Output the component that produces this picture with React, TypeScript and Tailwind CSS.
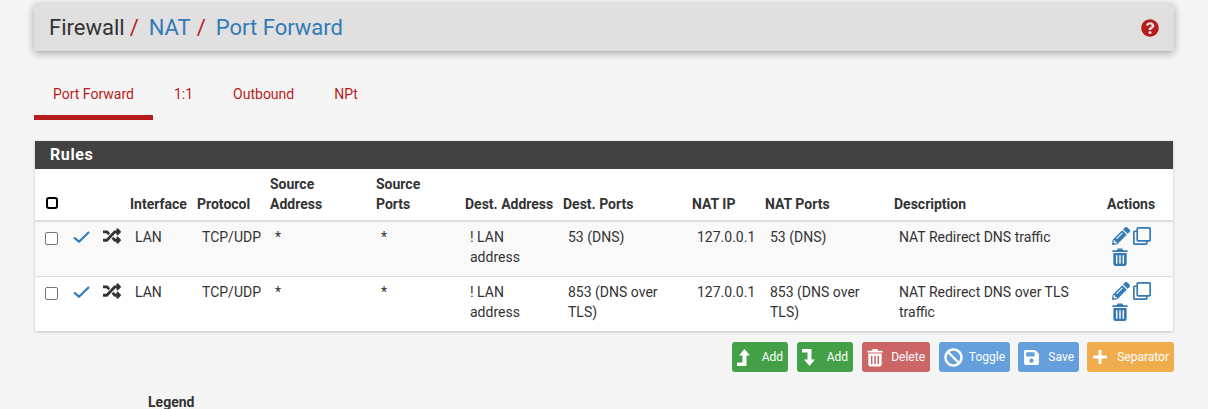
import React from "react";
import { FaBan, FaPencilAlt, FaPlus, FaQuestionCircle, FaRandom, FaRegClone, FaSave } from "react-icons/fa";

const TrashIcon = ({ className }: { className?: string }) => (
  <svg viewBox="0 0 18 20" className={className} fill="currentColor">
    <path d="M6.5 0.5h5l1 2h5v2h-17v-2h5z" />
    <path fillRule="evenodd" d="M1.5 5.5h15v12.5a2 2 0 0 1-2 2h-11a2 2 0 0 1-2-2zM4.5 8v9.5h1.6V8zM8.2 8v9.5h1.6V8zM11.9 8v9.5h1.6V8z" />
  </svg>
);

const CheckIcon = () => (
  <svg viewBox="0 0 17 12" className="h-3 w-[17px] text-[#337ab7]" fill="none" stroke="currentColor" strokeWidth="2.2">
    <path d="M1 6.5l5 4.2L16 1" />
  </svg>
);

const ArrowUpIcon = () => (
  <svg viewBox="0 0 13 17" className="h-[17px] w-[13px]" fill="currentColor">
    <path d="M7.5 0L13 6.5H9.5V17H0V13.5H5.5V6.5H2z" />
  </svg>
);

const ArrowDownIcon = () => (
  <svg viewBox="0 0 13 17" className="h-[17px] w-[13px]" fill="currentColor">
    <path d="M0 0H9.5V10.5H13L7.5 17L2 10.5H5.5V3.5H0z" />
  </svg>
);

const rules = [
  { dports: "53 (DNS)", natPorts: "53 (DNS)", description: "NAT Redirect DNS traffic" },
  { dports: "853 (DNS over TLS)", natPorts: "853 (DNS over TLS)", description: "NAT Redirect DNS over TLS traffic" },
];

const tabs = ["Port Forward", "1:1", "Outbound", "NPt"];

function Th({ children }: { children?: React.ReactNode }) {
  return (
    <th className="border-b-[2px] border-[#dddddd] px-[5px] pb-[6px] pt-[5px] text-left align-bottom font-bold leading-[20px]">
      {children}
    </th>
  );
}

function Td({ children, line }: { children?: React.ReactNode; line: boolean }) {
  return (
    <td className={`py-[5px] pl-[10px] pr-[5px] align-top leading-[20px] ${line ? "border-b border-[#dddddd]" : ""}`}>
      {children}
    </td>
  );
}

function Btn({ icon, label, color, width }: { icon: React.ReactNode; label: string; color: string; width: string }) {
  return (
    <button className={`flex h-[30px] items-center justify-between rounded-[3px] pl-[5px] pr-[5px] text-[12px] font-normal text-white ${color} ${width}`}>
      {icon}
      <span>{label}</span>
    </button>
  );
}

export default function App() {
  return (
    <div className="h-[409px] overflow-hidden bg-[#f5f5f5] px-[34px] pt-[4px] font-['Roboto',sans-serif] text-[#333333]">
      <div className="flex h-[47px] items-center justify-between rounded-[3px] bg-[#e0e0e0] pl-[15px] pr-[15px] text-[22px] shadow-[0_2px_8px_rgba(0,0,0,0.35)]">
        <h1 className="flex items-center">
          <span>Firewall</span>
          <span className="ml-[5px] mr-[10px] text-[#b71c1c]">/</span>
          <span className="text-[#337ab7]">NAT</span>
          <span className="ml-[6px] mr-[10px] text-[#b71c1c]">/</span>
          <span className="text-[#337ab7]">Port Forward</span>
        </h1>
        <FaQuestionCircle className="h-[18px] w-[18px] text-[#b71c1c]" />
      </div>

      <ul className="mt-[19px] flex h-[50px] text-[14px] text-[#b71c1c]">
        {tabs.map((tab, i) => (
          <li
            key={tab}
            className={`flex items-start pt-[14px] ${i === 0 ? "mr-px border-b-[5px] border-[#b71c1c] pl-[19px] pr-[19px]" : "px-[20px]"}`}
          >
            {tab}
          </li>
        ))}
      </ul>

      <div className="mx-px mt-[21px] bg-white shadow-[0_1px_3px_rgba(0,0,0,0.2)]">
        <h2 className="flex h-[28px] items-center bg-[#424242] pl-[15px] text-[16px] font-bold tracking-[0.6px] text-white">Rules</h2>
        <table className="w-full table-fixed border-separate border-spacing-0 text-[14px]">
          <colgroup>
            <col className="w-[28px]" />
            <col className="w-[29px]" />
            <col className="w-[33px]" />
            <col className="w-[67px]" />
            <col className="w-[73px]" />
            <col className="w-[106px]" />
            <col className="w-[89px]" />
            <col className="w-[98px]" />
            <col className="w-[129px]" />
            <col className="w-[73px]" />
            <col className="w-[129px]" />
            <col className="w-[213px]" />
            <col />
          </colgroup>
          <thead>
            <tr className="h-[53px]">
              <th className="border-b-[2px] border-[#dddddd] pb-[11px] pl-[11px] text-left align-bottom">
                <span className="block h-[12px] w-[12px] rounded-[3px] border-[2px] border-black" />
              </th>
              <Th />
              <Th />
              <Th>Interface</Th>
              <Th>Protocol</Th>
              <Th>Source Address</Th>
              <Th>Source Ports</Th>
              <Th><span className="whitespace-nowrap">Dest. Address</span></Th>
              <Th>Dest. Ports</Th>
              <Th>NAT IP</Th>
              <Th>NAT Ports</Th>
              <Th>Description</Th>
              <Th>Actions</Th>
            </tr>
          </thead>
          <tbody>
            {rules.map((rule, i) => {
              const line = i === 0;
              const edge = line ? "border-b border-[#dddddd]" : "";
              return (
                <tr key={rule.description} className={line ? "h-[55px] bg-[#f9f9f9]" : "h-[54px]"}>
                  <td className={`pl-[10px] pt-[10px] align-top ${edge}`}>
                    <span className="block h-[13px] w-[13px] rounded-[2px] border border-[#767676] bg-white" />
                  </td>
                  <td className={`pl-[10px] pt-[9px] align-top ${edge}`}><CheckIcon /></td>
                  <td className={`pl-[11px] pt-[5px] align-top ${edge}`}><FaRandom className="h-[18px] w-[18px]" /></td>
                  <Td line={line}>LAN</Td>
                  <Td line={line}>TCP/UDP</Td>
                  <Td line={line}>*</Td>
                  <Td line={line}>*</Td>
                  <Td line={line}>! LAN address</Td>
                  <Td line={line}>{rule.dports}</Td>
                  <Td line={line}>127.0.0.1</Td>
                  <Td line={line}>{rule.natPorts}</Td>
                  <Td line={line}>{rule.description}</Td>
                  <td className={`pl-[10px] pt-[5px] align-top text-[#337ab7] ${edge}`}>
                    <div className="flex w-[45px] flex-wrap items-start gap-x-[3px]">
                      <FaPencilAlt className="h-[18px] w-[18px]" />
                      <FaRegClone className="h-[18px] w-[18px]" />
                      <TrashIcon className="mt-[3px] h-[18px] w-[16px]" />
                    </div>
                  </td>
                </tr>
              );
            })}
          </tbody>
        </table>
      </div>

      <div className="mt-[11px] flex justify-end gap-[8px]">
        <div className="flex gap-[9px]">
          <Btn icon={<ArrowUpIcon />} label="Add" color="bg-[#43a047]" width="w-[56px]" />
          <Btn icon={<ArrowDownIcon />} label="Add" color="bg-[#43a047]" width="w-[56px]" />
          <Btn icon={<TrashIcon className="h-[19px] w-[16px]" />} label="Delete" color="bg-[#cc6666]" width="w-[68px]" />
          <Btn icon={<FaBan className="h-[19px] w-[19px]" />} label="Toggle" color="bg-[#66a0dc]" width="w-[71px]" />
        </div>
        <Btn icon={<FaSave className="h-[17px] w-[17px]" />} label="Save" color="bg-[#66a0dc]" width="w-[61px]" />
        <Btn icon={<FaPlus className="h-[16px] w-[16px]" />} label="Separator" color="bg-[#f0ad4e]" width="w-[87px]" />
      </div>

      <div className="mt-[20px] pl-[114px] text-[14px] font-bold">Legend</div>
    </div>
  );
}
